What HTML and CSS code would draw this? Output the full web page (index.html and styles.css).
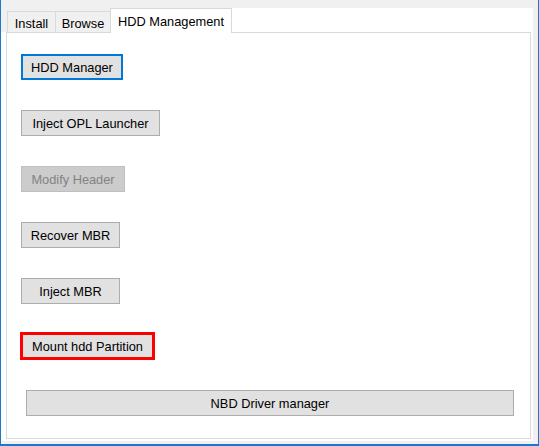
FILE: index.html
```html
<!DOCTYPE html>
<html>
<head>
<meta charset="utf-8">
<link rel="stylesheet" href="styles.css">
</head>
<body>
<div class="window">
  <div class="tabcontrol">
    <div class="tabstrip">
      <div class="tab tab-install">Install</div>
      <div class="tab tab-browse">Browse</div>
      <div class="tab tab-active">HDD Management</div>
      <div class="strip-fill"></div>
    </div>
    <div class="tab-body">
      <div class="page">
        <button class="btn btn-focus w-hdd">HDD Manager</button>
        <button class="btn w-opl">Inject OPL Launcher</button>
        <button class="btn btn-disabled w-modify">Modify Header</button>
        <button class="btn w-recover">Recover MBR</button>
        <button class="btn w-inject">Inject MBR</button>
        <button class="btn btn-mark w-mount">Mount hdd Partition</button>
        <button class="btn w-nbd">NBD Driver manager</button>
      </div>
    </div>
  </div>
</div>
</body>
</html>
```
FILE: styles.css
```css
html, body {
  margin: 0;
  padding: 0;
}
body {
  width: 539px;
  height: 446px;
  overflow: hidden;
  background: #f0f0f0;
  font-family: "Liberation Sans", Arial, sans-serif;
  font-size: 12.8px;
  color: #000;
}
.window {
  box-sizing: border-box;
  width: 539px;
  height: 446px;
  border-left: 1px solid #1979cf;
  border-right: 1px solid #1979cf;
  border-bottom: 2px solid #1979cf;
  background: #f0f0f0;
  display: flex;
  flex-direction: column;
}
.tabcontrol {
  width: 532px;
  height: 441px;
  display: flex;
  flex-direction: column;
}
.tabstrip {
  height: 32px;
  display: flex;
  align-items: flex-end;
  padding-left: 6px;
  flex: none;
}
.tab {
  box-sizing: border-box;
  height: 21px;
  border: 1px solid #d9d9d9;
  border-bottom: none;
  background: #f0f0f0;
  display: flex;
  align-items: center;
  justify-content: center;
  padding-top: 2px;
  white-space: nowrap;
  flex: none;
}
.tab-install {
  width: 49px;
}
.tab-browse {
  width: 56px;
  margin-left: -1px;
}
.tab-active {
  width: 122px;
  height: 25px;
  margin-left: -1px;
  margin-bottom: -1px;
  background: #fff;
  padding-top: 0;
  position: relative;
  z-index: 1;
}
.strip-fill {
  flex: 1;
  height: 24px;
  background: #fff;
}
.tab-body {
  flex: 1;
  background: #fff;
  padding: 0 2px 2px 5px;
  display: flex;
}
.page {
  box-sizing: border-box;
  flex: 1;
  border: 1px solid #d9d9d9;
  background: #fff;
  padding: 21px 0 0 14px;
  display: flex;
  flex-direction: column;
  align-items: flex-start;
}
.btn {
  box-sizing: border-box;
  height: 26px;
  margin: 0;
  padding: 0;
  border: 1px solid #adadad;
  background: #e1e1e1;
  font-family: inherit;
  font-size: inherit;
  color: #000;
  display: flex;
  align-items: center;
  justify-content: center;
  white-space: nowrap;
  flex: none;
}
.btn-focus {
  border: 2px solid #0078d7;
}
.btn-disabled {
  background: #cccccc;
  border-color: #bfbfbf;
  color: #838383;
}
.btn-mark {
  border: 3px solid #ff0000;
  height: 28px;
}
.w-hdd { width: 102px; }
.w-opl { width: 139px; margin-top: 30px; }
.w-modify { width: 104px; margin-top: 30px; }
.w-recover { width: 99px; margin-top: 30px; }
.w-inject { width: 99px; margin-top: 30px; }
.w-mount { width: 135px; margin-top: 28px; margin-left: -1px; }
.w-nbd { width: 488px; margin-top: 30px; margin-left: 5px; }
```
